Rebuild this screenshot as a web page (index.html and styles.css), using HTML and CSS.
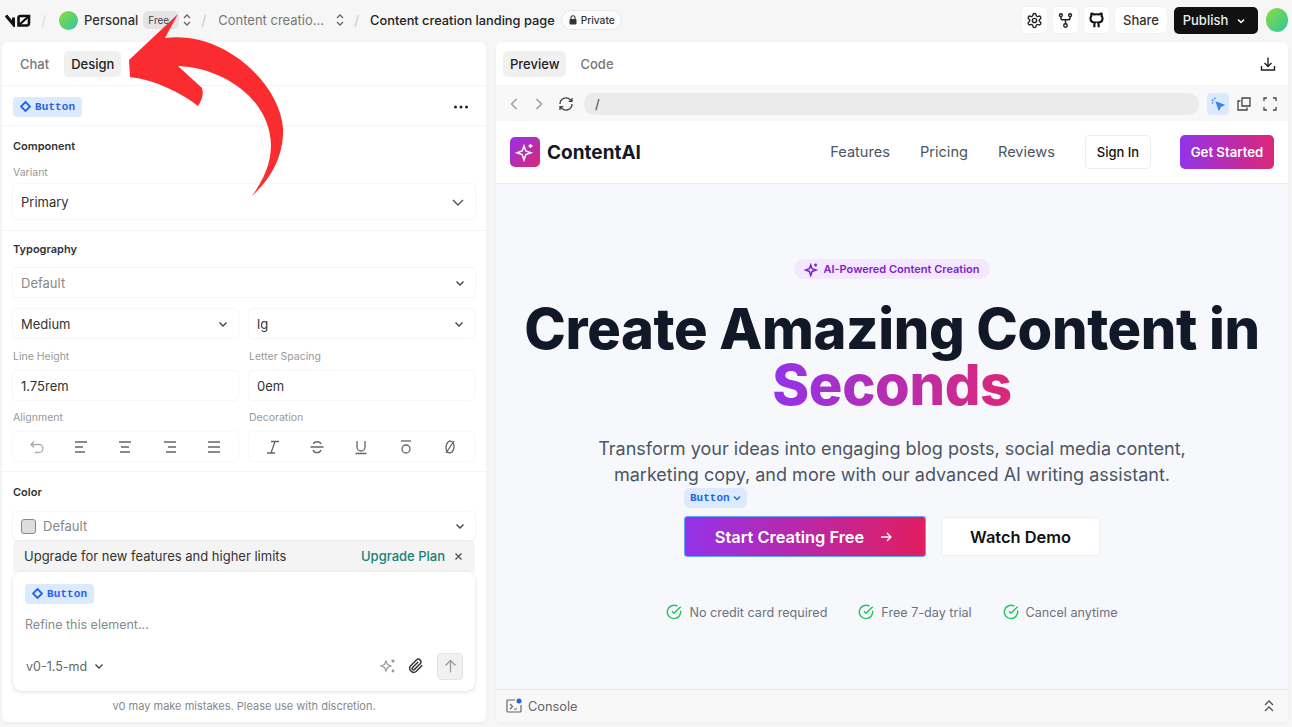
FILE: index.html
```html
<!DOCTYPE html>
<html lang="en">
<head>
<meta charset="utf-8">
<title>Content creation landing page</title>
<link rel="stylesheet" href="styles.css">
</head>
<body>
<div class="app">
  <header class="topbar">
    <div class="crumbs">
      <svg class="logo" width="26" height="13" viewBox="0 0 26 13" fill="none" stroke="#111" stroke-width="3"><path d="M1 1.5 L8.5 10.5 V3.5"/><path d="M13.5 11.5 V4 Q13.5 2 15.5 2 H24 V9 Q24 11.5 21.5 11.5 Z" stroke-width="2.6"/><path d="M14.5 10.5 L23 3" stroke-width="2.2"/></svg>
      <span class="slash first">/</span>
      <span class="avatar small"></span>
      <span class="crumb-name">Personal</span>
      <span class="free">Free</span>
      <svg class="updown" width="10" height="14" viewBox="0 0 10 14" fill="none" stroke="#666" stroke-width="1.3"><path d="M2 5 L5 2 L8 5M2 9 L5 12 L8 9"/></svg>
      <span class="slash">/</span>
      <span class="crumb-muted">Content creatio...</span>
      <svg class="updown" width="10" height="14" viewBox="0 0 10 14" fill="none" stroke="#666" stroke-width="1.3"><path d="M2 5 L5 2 L8 5M2 9 L5 12 L8 9"/></svg>
      <span class="slash">/</span>
      <span class="crumb-title">Content creation landing page</span>
      <span class="private"><svg width="8" height="10" viewBox="0 0 8 10" fill="#333"><rect x="0.5" y="4" width="7" height="5.5" rx="1"/><path d="M2 4 V2.8 a2 2 0 0 1 4 0 V4" fill="none" stroke="#333" stroke-width="1.1"/></svg>Private</span>
    </div>
    <div class="top-actions">
      <span class="icon-btn"><svg width="17" height="17" viewBox="0 0 24 24" fill="none" stroke="#222" stroke-width="2"><path d="M12.2 2h-.4a2 2 0 0 0-2 2v.2a2 2 0 0 1-1 1.7l-.4.3a2 2 0 0 1-2 0l-.2-.1a2 2 0 0 0-2.7.7l-.2.4a2 2 0 0 0 .7 2.7l.2.1a2 2 0 0 1 1 1.7v.5a2 2 0 0 1-1 1.8l-.2.1a2 2 0 0 0-.7 2.7l.2.4a2 2 0 0 0 2.7.7l.2-.1a2 2 0 0 1 2 0l.4.3a2 2 0 0 1 1 1.7v.2a2 2 0 0 0 2 2h.4a2 2 0 0 0 2-2v-.2a2 2 0 0 1 1-1.7l.4-.3a2 2 0 0 1 2 0l.2.1a2 2 0 0 0 2.7-.7l.2-.4a2 2 0 0 0-.7-2.7l-.2-.1a2 2 0 0 1-1-1.8v-.5a2 2 0 0 1 1-1.7l.2-.1a2 2 0 0 0 .7-2.7l-.2-.4a2 2 0 0 0-2.7-.7l-.2.1a2 2 0 0 1-2 0l-.4-.3a2 2 0 0 1-1-1.7V4a2 2 0 0 0-2-2z"/><circle cx="12" cy="12" r="3"/></svg></span>
      <span class="icon-btn"><svg width="17" height="17" viewBox="0 0 24 24" fill="none" stroke="#222" stroke-width="2"><circle cx="12" cy="19" r="2.5"/><circle cx="5.5" cy="4.5" r="2"/><circle cx="18.5" cy="4.5" r="2"/><path d="M5.5 6.5 V8 a3 3 0 0 0 3 3 h7 a3 3 0 0 0 3-3 V6.5 M12 11 v5.5"/></svg></span>
      <span class="icon-btn"><svg width="17" height="17" viewBox="0 0 24 24" fill="none" stroke="#111" stroke-width="3"><path d="M9 21.5 v-3.5 a4 4 0 0 1 1-3 c-3.5-.4-6.5-1.8-6.5-6 a5 5 0 0 1 1.3-3.5 a4.6 4.6 0 0 1 .1-3.3 s1.2-.3 3.9 1.4 a13 13 0 0 1 6.4 0 c2.7-1.7 3.9-1.4 3.9-1.4 a4.6 4.6 0 0 1 .1 3.3 a5 5 0 0 1 1.3 3.5 c0 4.2-3 5.6-6.5 6 a4 4 0 0 1 1 3 v3.5"/></svg></span>
      <span class="share">Share</span>
      <span class="publish">Publish<svg width="10" height="10" viewBox="0 0 10 10" fill="none" stroke="#fff" stroke-width="1.5"><path d="M2 3.5 L5 6.5 L8 3.5"/></svg></span>
      <span class="avatar large"></span>
    </div>
  </header>

  <main class="workspace">
    <section class="panel left">
      <nav class="tabs">
        <span class="tab">Chat</span>
        <span class="tab active">Design</span>
      </nav>
      <div class="element-row">
        <span class="chip"><svg width="11" height="11" viewBox="0 0 11 11" fill="none" stroke="#2563eb" stroke-width="1.8"><path d="M5.5 1 L10 5.5 L5.5 10 L1 5.5 Z"/></svg>Button</span>
        <svg width="16" height="6" viewBox="0 0 16 6" fill="#222"><circle cx="2.5" cy="3" r="1.5"/><circle cx="8" cy="3" r="1.5"/><circle cx="13.5" cy="3" r="1.5"/></svg>
      </div>
      <div class="group component">
        <h3>Component</h3>
        <label class="field-label variant">Variant</label>
        <div class="select big">Primary<svg class="chev" width="14" height="14" viewBox="0 0 14 14" fill="none" stroke="#555" stroke-width="1.4"><path d="M2 5 L7 10 L12 5"/></svg></div>
      </div>
      <div class="group typography">
        <h3>Typography</h3>
        <div class="select muted">Default<svg class="chev" width="10" height="10" viewBox="0 0 10 10" fill="none" stroke="#444" stroke-width="1.4"><path d="M1.5 3.5 L5 7 L8.5 3.5"/></svg></div>
        <div class="two">
          <div class="select">Medium<svg class="chev" width="10" height="10" viewBox="0 0 10 10" fill="none" stroke="#444" stroke-width="1.4"><path d="M1.5 3.5 L5 7 L8.5 3.5"/></svg></div>
          <div class="select">lg<svg class="chev" width="10" height="10" viewBox="0 0 10 10" fill="none" stroke="#444" stroke-width="1.4"><path d="M1.5 3.5 L5 7 L8.5 3.5"/></svg></div>
        </div>
        <div class="two">
          <div><label class="field-label">Line Height</label><div class="select">1.75rem</div></div>
          <div><label class="field-label">Letter Spacing</label><div class="select">0em</div></div>
        </div>
        <div class="two tight">
          <div>
            <label class="field-label">Alignment</label>
            <div class="segments">
              <svg width="16" height="16" viewBox="0 0 16 16" fill="none" stroke="#aaa" stroke-width="1.3"><path d="M5 2.5 L2 5.5 L5 8.5 M2 5.5 H10 a3.7 3.7 0 0 1 0 8 H6"/></svg>
              <svg width="16" height="16" viewBox="0 0 16 16" fill="none" stroke="#666" stroke-width="1.3"><path d="M2 3 H14 M2 8 H10 M2 13 H12"/></svg>
              <svg width="16" height="16" viewBox="0 0 16 16" fill="none" stroke="#666" stroke-width="1.3"><path d="M2 3 H14 M4 8 H12 M3 13 H13"/></svg>
              <svg width="16" height="16" viewBox="0 0 16 16" fill="none" stroke="#666" stroke-width="1.3"><path d="M2 3 H14 M6 8 H14 M4 13 H14"/></svg>
              <svg width="16" height="16" viewBox="0 0 16 16" fill="none" stroke="#666" stroke-width="1.3"><path d="M2 3 H14 M2 8 H14 M2 13 H14"/></svg>
            </div>
          </div>
          <div>
            <label class="field-label">Decoration</label>
            <div class="segments">
              <svg width="16" height="16" viewBox="0 0 16 16" fill="none" stroke="#666" stroke-width="1.3"><path d="M6 2.5 H14 M2 14 H10 M10 2.5 L6 14"/></svg>
              <svg width="16" height="16" viewBox="0 0 16 16" fill="none" stroke="#666" stroke-width="1.3"><path d="M1.5 8 H14.5 M12 5 C11 2 5 2 4.5 5 M4 11 C5 14.5 11 14.5 12 11"/></svg>
              <svg width="16" height="16" viewBox="0 0 16 16" fill="none" stroke="#666" stroke-width="1.3"><path d="M4 2 V8 a4 4 0 0 0 8 0 V2 M2.5 14.5 H13.5"/></svg>
              <svg width="16" height="16" viewBox="0 0 16 16" fill="none" stroke="#666" stroke-width="1.3"><path d="M3 2 H13"/><circle cx="8" cy="10" r="4"/></svg>
              <svg width="16" height="16" viewBox="0 0 16 16" fill="none" stroke="#666" stroke-width="1.3"><ellipse cx="8" cy="8" rx="4" ry="6" transform="rotate(6 8 8)"/><path d="M4 14 L12 2"/></svg>
            </div>
          </div>
        </div>
      </div>
      <div class="group color">
        <h3>Color</h3>
        <div class="select muted"><span class="swatch"></span>Default<svg class="chev" width="10" height="10" viewBox="0 0 10 10" fill="none" stroke="#444" stroke-width="1.4"><path d="M1.5 3.5 L5 7 L8.5 3.5"/></svg></div>
      </div>
      <div class="prompt-wrap">
        <div class="upgrade">
          <span>Upgrade for new features and higher limits</span>
          <span class="upgrade-link">Upgrade Plan</span>
          <svg width="9" height="9" viewBox="0 0 9 9" fill="none" stroke="#555" stroke-width="1.4"><path d="M1.5 1.5 L7.5 7.5 M7.5 1.5 L1.5 7.5"/></svg>
        </div>
        <div class="composer">
          <span class="chip"><svg width="11" height="11" viewBox="0 0 11 11" fill="none" stroke="#2563eb" stroke-width="1.8"><path d="M5.5 1 L10 5.5 L5.5 10 L1 5.5 Z"/></svg>Button</span>
          <div class="placeholder">Refine this element...</div>
          <div class="composer-foot">
            <span class="model">v0-1.5-md<svg width="10" height="10" viewBox="0 0 10 10" fill="none" stroke="#444" stroke-width="1.4"><path d="M1.5 3.5 L5 7 L8.5 3.5"/></svg></span>
            <span class="composer-tools">
              <svg width="16" height="16" viewBox="0 0 16 16" fill="none" stroke="#999" stroke-width="1.2"><path d="M6 4.5 L7.5 8 L11 9.5 L7.5 11 L6 14.5 L4.5 11 L1 9.5 L4.5 8 Z" transform="translate(0 -1.5)"/><circle cx="13" cy="3" r="1" fill="#999"/><circle cx="13" cy="13" r="0.8" fill="#999"/></svg>
              <svg width="16" height="16" viewBox="0 0 24 24" fill="none" stroke="#333" stroke-width="2.2"><path d="m21.4 11-9.2 9.2a6 6 0 0 1-8.4-8.4l9.2-9.2a4 4 0 0 1 5.6 5.6l-9.2 9.2a2 2 0 0 1-2.8-2.8l8.5-8.5"/></svg>
              <span class="send"><svg width="15" height="15" viewBox="0 0 15 15" fill="none" stroke="#999" stroke-width="1.3"><path d="M7.5 13.5 V1.5 M2.5 6.5 L7.5 1.5 L12.5 6.5"/></svg></span>
            </span>
          </div>
        </div>
        <p class="disclaimer">v0 may make mistakes. Please use with discretion.</p>
      </div>
    </section>

    <section class="panel right">
      <nav class="tabs preview-tabs">
        <span class="tab active">Preview</span>
        <span class="tab">Code</span>
        <svg class="download" width="16" height="16" viewBox="0 0 16 16" fill="none" stroke="#222" stroke-width="1.4"><path d="M8 1.5 V10 M4.5 7 L8 10.5 L11.5 7 M1.5 10 V14 H14.5 V10"/></svg>
      </nav>
      <div class="browserbar">
        <svg width="10" height="14" viewBox="0 0 10 14" fill="none" stroke="#999" stroke-width="1.4"><path d="M7.5 2 L2.5 7 L7.5 12"/></svg>
        <svg class="forward" width="10" height="14" viewBox="0 0 10 14" fill="none" stroke="#999" stroke-width="1.4"><path d="M2.5 2 L7.5 7 L2.5 12"/></svg>
        <svg class="reload" width="16" height="16" viewBox="0 0 24 24" fill="none" stroke="#444" stroke-width="2"><path d="M3 12a9 9 0 0 1 15.5-6.3L21 8M21 3v5h-5M21 12a9 9 0 0 1-15.5 6.3L3 16M3 21v-5h5"/></svg>
        <div class="url">/</div>
        <span class="pick"><svg width="14" height="14" viewBox="0 0 14 14" fill="none" stroke="#3b82f6" stroke-width="1.4"><path d="M5.5 5.5 L12.5 8 L9.5 9.5 L8 12.5 Z" fill="#3b82f6"/><path d="M1 3 L2.5 3.7 M3.5 0.8 L4 2.3 M0.8 6 L2.2 5.6"/></svg></span>
        <svg width="14" height="14" viewBox="0 0 14 14" fill="none" stroke="#444" stroke-width="1.3"><path d="M5 1 H13 V9 H5 Z M3.5 4 H1 V13 H10 V10.5"/></svg>
        <svg class="expand" width="14" height="14" viewBox="0 0 14 14" fill="none" stroke="#444" stroke-width="1.3"><path d="M1 4 V1 H4 M10 1 H13 V4 M13 10 V13 H10 M4 13 H1 V10"/></svg>
      </div>
      <div class="site">
        <div class="site-nav">
          <div class="brand">
            <span class="brand-mark"><svg width="20" height="20" viewBox="0 0 20 20" fill="none" stroke="#fff" stroke-width="1.5"><path d="M9 4 L10.8 9 L16 10.8 L10.8 12.6 L9 18 L7.2 12.6 L2 10.8 L7.2 9 Z"/><path d="M15.5 2 V6 M13.5 4 H17.5"/></svg></span>
            <span class="brand-name">ContentAI</span>
          </div>
          <div class="site-links">
            <span>Features</span><span>Pricing</span><span>Reviews</span>
            <span class="signin">Sign In</span>
            <span class="started">Get Started</span>
          </div>
        </div>
        <div class="hero">
          <div class="badge"><svg width="15" height="15" viewBox="0 0 20 20" fill="none" stroke="#7e22ce" stroke-width="2"><path d="M9 4 L10.8 9 L16 10.8 L10.8 12.6 L9 18 L7.2 12.6 L2 10.8 L7.2 9 Z"/><path d="M15.5 2 V6 M13.5 4 H17.5"/></svg>AI-Powered Content Creation</div>
          <h1>Create Amazing Content in <span class="grad">Seconds</span></h1>
          <p class="lede">Transform your ideas into engaging blog posts, social media content, marketing copy, and more with our advanced AI writing assistant.</p>
          <div class="cta">
            <div class="primary">
              <span class="selection-tag">Button<svg width="8" height="8" viewBox="0 0 8 8" fill="none" stroke="#2563eb" stroke-width="1.4"><path d="M1 2.5 L4 5.5 L7 2.5"/></svg></span>
              Start Creating Free
              <svg width="14" height="14" viewBox="0 0 14 14" fill="none" stroke="#fff" stroke-width="1.3"><path d="M2 7 H12 M8 3 L12 7 L8 11"/></svg>
            </div>
            <div class="secondary">Watch Demo</div>
          </div>
          <div class="checks">
            <span><svg width="16" height="16" viewBox="0 0 24 24" fill="none" stroke="#22c55e" stroke-width="2.2"><path d="M21.8 10A10 10 0 1 1 17 3.3"/><path d="m9 11 3 3L22 4"/></svg>No credit card required</span>
            <span><svg width="16" height="16" viewBox="0 0 24 24" fill="none" stroke="#22c55e" stroke-width="2.2"><path d="M21.8 10A10 10 0 1 1 17 3.3"/><path d="m9 11 3 3L22 4"/></svg>Free 7-day trial</span>
            <span><svg width="16" height="16" viewBox="0 0 24 24" fill="none" stroke="#22c55e" stroke-width="2.2"><path d="M21.8 10A10 10 0 1 1 17 3.3"/><path d="m9 11 3 3L22 4"/></svg>Cancel anytime</span>
          </div>
        </div>
      </div>
      <div class="console">
        <span class="console-label">
          <svg width="16" height="16" viewBox="0 0 16 16" fill="none" stroke="#666" stroke-width="1.2"><path d="M9 2 H2 a1 1 0 0 0-1 1 V13 a1 1 0 0 0 1 1 H14 a1 1 0 0 0 1-1 V7 M4 6 L6.5 8.5 L4 11 M8 11 H11"/><circle cx="13" cy="3" r="2.5" fill="#2563eb" stroke="none"/></svg>
          Console
        </span>
        <svg width="12" height="14" viewBox="0 0 12 14" fill="none" stroke="#555" stroke-width="1.3"><path d="M2 6 L6 2 L10 6 M2 12 L6 8 L10 12"/></svg>
      </div>
    </section>
  </main>

  <svg class="annotation" width="300" height="210" viewBox="0 0 300 210"><path fill="#fb2c2f" d="M178 14 L129 60 L130 77 C155 80 180 92 198 106 C202 100 204 94 202 88 L178 66 C225 68 270 100 271 145 C271 165 262 182 252 196 C272 178 284 155 283 128 C280 85 225 30 165 38 Z"/></svg>
</div>
</body>
</html>
```

FILE: styles.css
```css
* { box-sizing: border-box; }
html, body { margin: 0; height: 100%; overflow: hidden; }
body { font-family: Inter, "Noto Sans", sans-serif; background: #f6f6f6; color: #1a1a1a; }
svg { flex: none; display: block; }
h1, h3, p { margin: 0; }

.app { position: relative; width: 1292px; height: 727px; display: flex; flex-direction: column; }

/* top bar */
.topbar { height: 42px; display: flex; align-items: center; justify-content: space-between; padding: 0 4px 2px 5px; }
.crumbs { display: flex; align-items: center; font-size: 13px; }
.logo { margin-right: 10px; }
.slash { color: #ccc; margin: 0 11px 0 9px; font-size: 14px; }
.slash.first { margin: 0 13px 0 0; color: #ddd; }
.avatar { display: block; border-radius: 50%; background: linear-gradient(135deg, #8fdc3f, #2ac7a0); }
.avatar.small { width: 19px; height: 19px; margin-right: 6px; }
.avatar.large { width: 22px; height: 24px; margin-left: 2px; }
.crumb-name { color: #333; font-weight: 500; }
.free { background: #e4e4e4; border-radius: 6px; font-size: 10px; padding: 3px 10px 3px 5px; margin-left: 5px; margin-right: 3px; color: #444; }
.crumb-muted { color: #777; margin-left: 1px; margin-right: 11px; }
.crumb-title { color: #222; font-weight: 500; font-size: 12.8px; margin-left: 0; }
.private { display: flex; align-items: center; gap: 4px; margin-left: 6px; padding: 3px 6px 3px 7px; border: 1px solid #e8e8e8; border-radius: 10px; background: #fcfcfc; font-size: 10.2px; font-weight: 500; color: #333; }
.top-actions { display: flex; align-items: center; gap: 6px; }
.icon-btn { width: 25px; height: 26px; display: flex; align-items: center; justify-content: center; background: #fff; border-radius: 5px; box-shadow: 0 0 2px rgba(0,0,0,.05); }
.share { height: 26px; width: 52px; display: flex; align-items: center; justify-content: center; background: #fff; border-radius: 5px; font-size: 13px; font-weight: 500; color: #333; box-shadow: 0 0 2px rgba(0,0,0,.05); }
.publish { height: 27px; width: 84px; margin-left: 1px; display: flex; align-items: center; justify-content: center; gap: 8px; padding-right: 3px; background: #111; border-radius: 5px; color: #eee; font-size: 13px; font-weight: 500; }
.publish svg { margin-top: 1px; }

/* panels */
.workspace { display: flex; gap: 10px; padding: 0 4px 0 2px; flex: none; height: 680px; }
.panel { background: #fff; border-radius: 6px; display: flex; flex-direction: column; overflow: hidden; box-shadow: 0 1px 3px rgba(0,0,0,.05); }
.panel.left { width: 484px; flex: none; }
.panel.right { flex: 1; min-width: 0; }
.tabs { height: 44px; display: flex; align-items: center; gap: 8px; padding: 0 11px; border-bottom: 1px solid #f4f4f4; flex: none; }
.tab { height: 26px; padding: 0 7px; display: flex; align-items: center; font-size: 13px; font-weight: 500; color: #777; border-radius: 5px; }
.tab.active { background: #f0f0f0; color: #222; }
.preview-tabs { gap: 7px; padding: 0 12px 0 7px; }
.download { margin-left: auto; }

.element-row { height: 40px; display: flex; align-items: center; justify-content: space-between; padding: 2px 17px 0 11px; border-bottom: 1px solid #f4f4f4; flex: none; }
.chip { display: inline-flex; align-items: center; gap: 4px; height: 20px; padding: 0 7px; background: #dbeafe; border-radius: 4px; color: #2563eb; font: 700 11px "Liberation Mono", monospace; letter-spacing: 0.1px; }

.group { padding: 0 11px; border-bottom: 1px solid #f4f4f4; flex: none; }
.group h3 { font-size: 11px; font-weight: 600; color: #333; line-height: 14px; }
.field-label { display: block; font-size: 10.5px; color: #999; line-height: 14px; margin-bottom: 7px; }
.select { position: relative; height: 29px; display: flex; align-items: center; padding: 0 8px; background: #fff; border-radius: 4px; font-size: 13px; color: #333; box-shadow: 0 0 2px rgba(0,0,0,.12); }
.chev { position: absolute; right: 10px; top: 50%; transform: translateY(-50%); }
.select.big { height: 35px; margin-top: 4px; }
.select.muted { color: #888; }
.two { display: grid; grid-template-columns: 225px 225px; gap: 11px; margin-top: 12px; }
.two.tight { margin-top: 11px; }
.component { height: 105px; padding-top: 13px; }
.variant { margin: 13px 0 0; }
.typography { height: 241px; padding-top: 11px; }
.typography h3 { margin-bottom: 12px; }
.segments { height: 29px; display: flex; align-items: center; justify-content: space-around; border-radius: 4px; box-shadow: 0 0 2px rgba(0,0,0,.1); padding: 0 2px; }
.color { height: 68px; padding-top: 13px; border-bottom: 0; }
.color h3 { margin-bottom: 13px; }
.color .select { height: 28px; }
.swatch { width: 15px; height: 15px; border-radius: 3px; background: #ddd; border: 1.5px solid #888; margin-right: 7px; }

.prompt-wrap { padding: 0 11px; flex: none; }
.upgrade { height: 32px; display: flex; align-items: center; padding: 0 12px 0 11px; background: #f4f4f4; border-radius: 6px 6px 0 0; font-size: 13px; color: #333; }
.upgrade-link { margin-left: auto; margin-right: 9px; color: #17807a; font-weight: 500; }
.composer { height: 119px; padding: 11px 12px 0 12px; background: #fff; border-radius: 9px; box-shadow: 0 1px 4px rgba(0,0,0,.14); }
.placeholder { font-size: 12.5px; color: #8a8a8a; margin-top: 13px; line-height: 16px; }
.composer-foot { display: flex; align-items: center; justify-content: space-between; margin-top: 20px; }
.model { display: flex; align-items: center; gap: 7px; font-size: 12.5px; color: #666; margin-left: 1px; }
.composer-tools { display: flex; align-items: center; gap: 12px; }
.send { width: 26px; height: 27px; display: flex; align-items: center; justify-content: center; background: #f1f1f1; border: 1px solid #e4e4e4; border-radius: 4px; margin-left: 1px; }
.disclaimer { text-align: center; font-size: 11px; color: #888; margin-top: 8px; line-height: 14px; }

/* preview */
.browserbar { height: 35px; display: flex; align-items: center; gap: 8px; padding: 0 11px 0 13px; background: #f8f8f8; flex: none; }
.forward { margin-left: 7px; }
.reload { margin-left: 6px; }
.url { flex: 1; height: 22px; display: flex; align-items: center; padding: 0 11px; margin-left: 2px; background: #ebebec; border-radius: 10px; font-size: 13px; color: #444; }
.pick { width: 22px; height: 22px; display: flex; align-items: center; justify-content: center; background: #dbeafe; border-radius: 4px; }
.expand { margin-left: 4px; }

.site { flex: 1; min-height: 0; display: flex; flex-direction: column; background: #f7f8fb; }
.site-nav { height: 63px; flex: none; display: flex; align-items: center; justify-content: space-between; padding: 0 14px; background: #fff; border-bottom: 1px solid #e8e9ec; }
.brand { display: flex; align-items: center; gap: 7px; }
.brand-mark { width: 30px; height: 30px; display: flex; align-items: center; justify-content: center; border-radius: 5px; background: linear-gradient(135deg, #9333ea, #db2777); }
.brand-name { font-size: 19px; font-weight: 700; color: #111827; }
.site-links { display: flex; align-items: center; font-size: 14.6px; color: #4b5563; gap: 30px; }
.signin { height: 34px; width: 66px; display: flex; align-items: center; justify-content: center; background: #fff; border: 1px solid #eee; border-radius: 4px; color: #111; font-size: 13px; font-weight: 500; }
.started { height: 34px; width: 94px; display: flex; align-items: center; justify-content: center; background: linear-gradient(90deg, #9333ea, #db2777); border-radius: 5px; color: #fff; font-size: 13.2px; font-weight: 600; margin-left: -1px; }

.hero { flex: 1; display: flex; flex-direction: column; align-items: center; padding-top: 75px; }
.badge { height: 20px; display: flex; align-items: center; gap: 4px; padding: 0 10px; background: #f3e8ff; border-radius: 10px; color: #7e22ce; font-size: 11px; font-weight: 600; }
h1 { width: 760px; margin-top: 22px; text-align: center; font-size: 56px; font-weight: 800; line-height: 56px; color: #111827; letter-spacing: -0.36px; }
.grad { display: inline-block; background: linear-gradient(90deg, #9333ea, #db2777); -webkit-background-clip: text; background-clip: text; color: transparent; }
.lede { width: 620px; margin-top: 23px; text-align: center; font-size: 18.03px; line-height: 26px; color: #4b5563; }
.cta { display: flex; align-items: center; gap: 15px; margin-top: 28px; }
.primary { position: relative; width: 242px; height: 41px; display: flex; align-items: center; justify-content: center; gap: 15px; padding-right: 2px; background: linear-gradient(90deg, #9333ea, #e11d5f); border: 1px solid #60a5fa; border-radius: 3px; color: #fff; font-size: 16.4px; font-weight: 600; }
.selection-tag { position: absolute; left: -1px; top: -29px; height: 20px; padding: 0 6px; display: flex; align-items: center; gap: 3px; background: #dbeafe; border-radius: 6px; color: #2563eb; font: 700 11px "Liberation Mono", monospace; }
.secondary { width: 159px; height: 39px; display: flex; align-items: center; justify-content: center; background: #fff; border: 1px solid #eee; border-radius: 3px; color: #111; font-size: 16.4px; font-weight: 600; }
.checks { display: flex; gap: 31px; margin-top: 47px; font-size: 12.6px; color: #6b7280; }
.checks span { display: flex; align-items: center; gap: 7px; }

.console { height: 33px; flex: none; display: flex; align-items: center; justify-content: space-between; padding: 0 13px 0 10px; background: #f8f8f8; border-top: 1px solid #e6e6e6; font-size: 12.8px; color: #666; }
.console-label { display: flex; align-items: center; gap: 6px; }

.annotation { position: absolute; left: 0; top: 0; pointer-events: none; }
```
